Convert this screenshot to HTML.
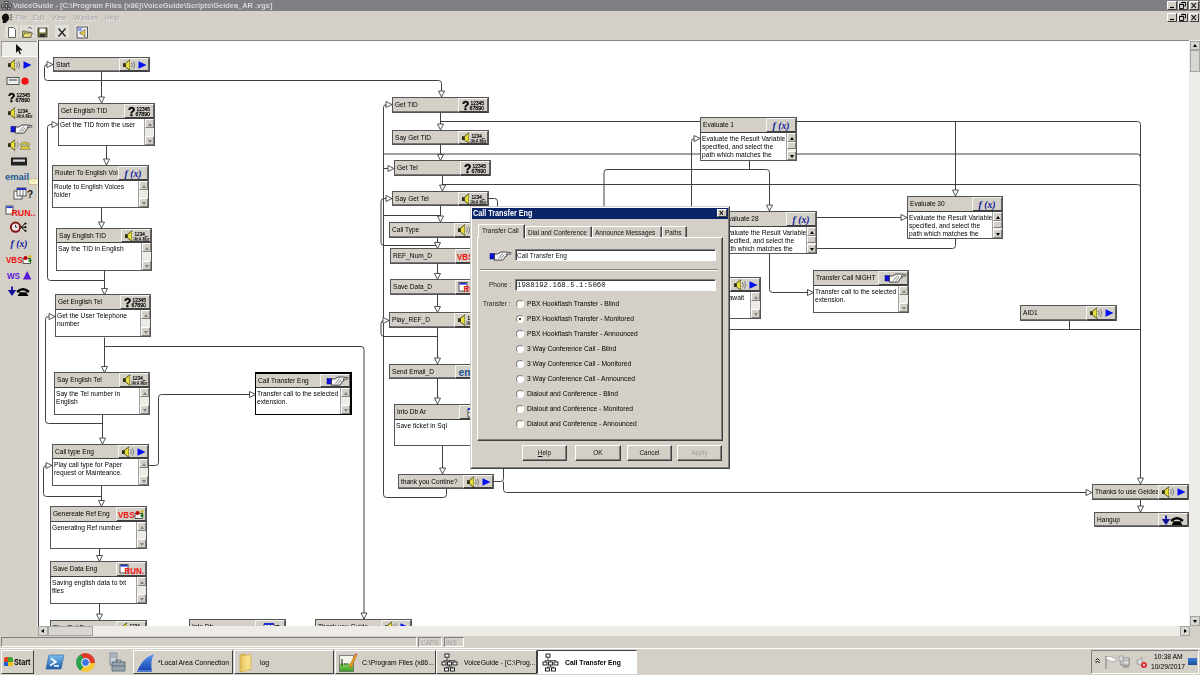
<!DOCTYPE html><html><head><meta charset="utf-8"><style>
*{box-sizing:border-box}
.t,.ti,.bt{filter:grayscale(1)}
body{margin:0;width:1200px;height:675px;overflow:hidden;position:relative;background:#d4d0c8;font-family:"Liberation Sans",sans-serif;font-size:8px;color:#000}
.a{position:absolute}
.t{position:absolute;white-space:nowrap;line-height:1;transform:scaleX(.85);transform-origin:0 0}
.rz{border-top:1px solid #fff;border-left:1px solid #fff;border-right:1px solid #404040;border-bottom:1px solid #404040;background:#d4d0c8}
.fl{border:1px solid #a4a4a4;background:#d8d6d0}
.sk{border-top:1px solid #808080;border-left:1px solid #808080;border-right:1px solid #fff;border-bottom:1px solid #fff}
.n{position:absolute;border:1px solid #555;background:#d4d0c8;box-shadow:inset -1px -1px 0 #777}
.n .ti{position:absolute;left:2px;top:2.5px;font-size:8px;white-space:nowrap;line-height:1;color:#000;transform:scaleX(.82);transform-origin:0 0}
.n .ib{position:absolute;right:0;top:0;border-top:1px solid #f4f4f2;border-left:1px solid #f4f4f2;border-right:1px solid #606060;border-bottom:2px solid #404040;background:#d4d0c8;overflow:hidden}
.n .bd{position:absolute;left:0;right:0;background:#fff;border-top:1px solid #404040;overflow:hidden}
.n .bt{position:absolute;left:1px;top:2px;font-size:8px;line-height:8.2px;white-space:pre;color:#000;transform:scaleX(.83);transform-origin:0 0}
.n .sb{position:absolute;right:0;top:0;bottom:0;width:10px;background:#ecebe6;border-left:1px solid #a0a0a0}
.n .sb i{position:absolute;left:0;width:9px;height:9px;background:#d4d0c8;border-top:1px solid #fff;border-left:1px solid #fff;border-right:1px solid #808080;border-bottom:1px solid #808080}
</style></head><body><div class="a" style="left:0;top:0;width:1200px;height:11px;background:#807f84"></div><div class="t" style="left:13px;top:2px;font-size:8px;font-weight:bold;color:#d8d6d0;transform:scaleX(.93)">VoiceGuide - [C:\Program Files (x86)\VoiceGuide\Scripts\Geidea_AR .vgs]</div><svg class="a" style="left:1px;top:1px" width="11" height="9" viewBox="0 0 11 9"><g fill="#eee" stroke="#222" stroke-width="0.7"><rect x="4" y="0.5" width="3" height="2"/><rect x="0.5" y="4" width="2.5" height="2"/><rect x="4.2" y="4" width="2.5" height="2"/><rect x="8" y="4" width="2.5" height="2"/><rect x="2" y="7" width="2.5" height="1.8"/><rect x="6.5" y="7" width="2.5" height="1.8"/></g></svg><div class="a rz" style="left:1167px;top:1px;width:10px;height:9px"></div><div class="a rz" style="left:1178px;top:1px;width:10px;height:9px"></div><div class="a rz" style="left:1189px;top:1px;width:10px;height:9px"></div><svg class="a" style="left:1167px;top:1px" width="32" height="9" viewBox="0 0 32 9"><path d="M3 6.5h4" stroke="#000" stroke-width="1.2"/><path d="M14.5 1.5h4v3.5h-1.2M12.5 3.5h4v4h-4z" fill="none" stroke="#000" stroke-width="0.9"/><path d="M14.5 1.3h4M12.5 3.3h4" stroke="#000" stroke-width="1.2"/><path d="M24.5 2l4.5 5M29 2l-4.5 5" stroke="#000" stroke-width="1.1"/></svg><div class="a" style="left:0;top:11px;width:1200px;height:13px;background:#d4d0c8"></div><div class="t" style="left:16px;top:14px;font-size:8px;color:#a09e9a;text-shadow:0.5px 0.5px 0 #f4f4f2">File</div><div class="t" style="left:33px;top:14px;font-size:8px;color:#a09e9a;text-shadow:0.5px 0.5px 0 #f4f4f2">Edit</div><div class="t" style="left:52px;top:14px;font-size:8px;color:#a09e9a;text-shadow:0.5px 0.5px 0 #f4f4f2">View</div><div class="t" style="left:74px;top:14px;font-size:8px;color:#a09e9a;text-shadow:0.5px 0.5px 0 #f4f4f2">Window</div><div class="t" style="left:105px;top:14px;font-size:8px;color:#a09e9a;text-shadow:0.5px 0.5px 0 #f4f4f2">Help</div><div class="a rz" style="left:1167px;top:13px;width:10px;height:9px"></div><div class="a rz" style="left:1178px;top:13px;width:10px;height:9px"></div><div class="a rz" style="left:1189px;top:13px;width:10px;height:9px"></div><svg class="a" style="left:1167px;top:13px" width="32" height="9" viewBox="0 0 32 9"><path d="M3 6.5h4" stroke="#000" stroke-width="1.2"/><path d="M14.5 1.5h4v3.5h-1.2M12.5 3.5h4v4h-4z" fill="none" stroke="#000" stroke-width="0.9"/><path d="M14.5 1.3h4M12.5 3.3h4" stroke="#000" stroke-width="1.2"/><path d="M24.5 2l4.5 5M29 2l-4.5 5" stroke="#000" stroke-width="1.1"/></svg><div class="a" style="left:0;top:24px;width:1200px;height:16px;background:#d4d0c8"></div><svg class="a" style="left:0;top:24px" width="100" height="16" viewBox="0 0 100 16"><g fill="#e2e0da"><rect x="5" y="1" width="13" height="13"/><rect x="20" y="1" width="14" height="13"/><rect x="35" y="1" width="14" height="13"/><rect x="55" y="1" width="14" height="13"/><rect x="75" y="1" width="14" height="13"/></g><path d="M8.5 3.5h5l2 2v8h-7z" fill="#fff" stroke="#555" stroke-width="0.9"/><path d="M22.5 7h4l1 1h3.5v5.5h-8.5z" fill="#c8c060" stroke="#555" stroke-width="0.8"/><path d="M22.5 13.5l2-4.5h8l-2 4.5z" fill="#e0d870" stroke="#555" stroke-width="0.8"/><path d="M28 4q3-2 4 1" fill="none" stroke="#555" stroke-width="0.8"/><rect x="38" y="4" width="9" height="9" fill="#707030" stroke="#333" stroke-width="0.8"/><rect x="39.5" y="4.5" width="6" height="4" fill="#fff"/><rect x="40" y="10" width="5" height="3" fill="#333"/><path d="M58.5 4.5l7 8M65.5 4.5l-7 8" stroke="#222" stroke-width="1.3"/><rect x="77" y="3" width="10.5" height="11" fill="#f0f0f8" stroke="#444" stroke-width="0.9"/><rect x="78" y="4" width="4" height="3" fill="#90a0f0"/><path d="M80 8h2l3-3v8l-3-3h-2z" fill="#e0d040" stroke="#555" stroke-width="0.6"/></svg><svg class="a" style="left:1px;top:12px" width="12" height="12" viewBox="0 0 12 12"><path d="M3 2q3-1.5 4.5 1l.3 2 .8 1-.8.5.3 1.2-1 .4q0 1.6-1.6 1.3l-.5 1.6H1.5l.4-2.3Q0 6 1.2 4 2 2.5 3 2z" fill="#111"/><path d="M9 3.5l2-1M9.3 5.2h2.2M9 7l2 1" stroke="#111" stroke-width="0.7"/></svg><div class="a" style="left:1px;top:41px;width:36px;height:16px;background:#ecebe6;border-top:1px solid #909090;border-left:1px solid #a0a0a0;border-bottom:1px solid #fff"></div><div class="a" style="left:5px;top:43px;width:28px;height:12px"><svg width="28" height="12" viewBox="0 0 28 12" style="position:absolute;overflow:visible;"><path d="M11 1v9l2.2-2.2 1.5 3.5 1.3-.6-1.5-3.4h3.2z" fill="#111"/></svg></div><div class="a" style="left:5px;top:59px;width:28px;height:12px"><svg width="28" height="12" viewBox="0 0 28 12" style="position:absolute;overflow:visible;"><path d="M3 4.2h3v3.8H3z" fill="#303018"/><path d="M5.5 4.2l4.5-3.4v10.6l-4.5-3.4z" fill="#e4dc40" stroke="#3a3a10" stroke-width="0.8"/><path d="M10.6 1.5v9.2" stroke="#f4f4f4" stroke-width="1.1" stroke-dasharray="2 1"/><path d="M11.5 3.5q1.5 2.5 0 5M13.5 2.3q2.4 3.7 0 7.4" fill="none" stroke="#808080" stroke-width="1"/><path d="M18.5 2.2l8 3.8-8 3.8z" fill="#0010f0"/></svg></div><div class="a" style="left:5px;top:75px;width:28px;height:12px"><svg width="28" height="12" viewBox="0 0 28 12" style="position:absolute;overflow:visible;"><rect x="2" y="2.5" width="12" height="7" fill="#eee" stroke="#333" stroke-width="0.8"/><path d="M4 5h8" stroke="#333" stroke-width="1"/><circle cx="20" cy="6.2" r="3.6" fill="#f01010"/></svg></div><div class="a" style="left:5px;top:91px;width:28px;height:12px"><svg width="28" height="12" viewBox="0 0 28 12" style="position:absolute;overflow:visible;filter:grayscale(1);"><text x="3" y="10.8" font-family="Liberation Sans" font-weight="bold" font-size="12" fill="#000" stroke="#000" stroke-width="0.3">?</text><text x="11.5" y="5.6" font-family="Liberation Sans" font-size="6.2" fill="#000" stroke="#000" stroke-width="0.25" textLength="13.5" lengthAdjust="spacingAndGlyphs">12345</text><text x="10.5" y="11.2" font-family="Liberation Sans" font-size="6.2" fill="#000" stroke="#000" stroke-width="0.25" textLength="14.5" lengthAdjust="spacingAndGlyphs">67890</text></svg></div><div class="a" style="left:5px;top:107px;width:28px;height:12px"><svg width="28" height="12" viewBox="0 0 28 12" style="position:absolute;overflow:visible;"><path d="M3 4.2h3v3.8H3z" fill="#303018"/><path d="M5.5 4.2l4.5-3.4v10.6l-4.5-3.4z" fill="#e4dc40" stroke="#3a3a10" stroke-width="0.8"/><path d="M10.6 1.5v9.2" stroke="#f4f4f4" stroke-width="1.1" stroke-dasharray="2 1"/><g style="filter:grayscale(1)"><text x="12.5" y="5.6" font-family="Liberation Sans" font-size="6" fill="#000" stroke="#000" stroke-width="0.2" textLength="13" lengthAdjust="spacingAndGlyphs">1234_</text><text x="11.5" y="11.2" font-family="Liberation Sans" font-weight="bold" font-size="5.4" fill="#000" textLength="16" lengthAdjust="spacingAndGlyphs">IAtA Mor</text></g></svg></div><div class="a" style="left:5px;top:123px;width:28px;height:12px"><svg width="28" height="12" viewBox="0 0 28 12" style="position:absolute;overflow:visible;"><rect x="6" y="3.5" width="4.5" height="5.5" fill="#1010e0" stroke="#000060" stroke-width="0.5"/><path d="M10.5 4h3l3.5-2h4.5l5.2.6q1 .9-.2 1.4l-4.5.1 1 .6q.5 1-.6 1.4l-1 .1q0 1.3-1 1.6l-.6 1.5q-.5.8-1.5.8h-8z" fill="#f4f4f4" stroke="#202020" stroke-width="0.8"/><path d="M14.5 8.5l4-5M17 8.8l3-4" stroke="#555" stroke-width="0.7"/></svg></div><div class="a" style="left:5px;top:139px;width:28px;height:12px"><svg width="28" height="12" viewBox="0 0 28 12" style="position:absolute;overflow:visible;"><path d="M3 4.2h3v3.8H3z" fill="#303018"/><path d="M5.5 4.2l4.5-3.4v10.6l-4.5-3.4z" fill="#e4dc40" stroke="#3a3a10" stroke-width="0.8"/><path d="M10.6 1.5v9.2" stroke="#f4f4f4" stroke-width="1.1" stroke-dasharray="2 1"/><path d="M10 3.5q1.5 2.5 0 5M12 2.5q2.2 3.5 0 7" fill="none" stroke="#888" stroke-width="0.9"/><path d="M15 5q5-4 10 0l-1 1.5h-1.5l-.5-1q-2.5-.8-4.5 0l-.5 1h-1.5zM16.5 7h7l1.5 3.5h-10z" fill="#d8c830" stroke="#666" stroke-width="0.5"/></svg></div><div class="a" style="left:5px;top:155px;width:28px;height:12px"><svg width="28" height="12" viewBox="0 0 28 12" style="position:absolute;overflow:visible;"><rect x="6" y="2.5" width="16" height="8" fill="#222"/><rect x="8" y="4.5" width="12" height="2.2" fill="#ddd"/></svg></div><div class="a" style="left:5px;top:171px;width:28px;height:12px"><svg width="28" height="12" viewBox="0 0 28 12" style="position:absolute;overflow:visible;"><text x="0" y="9" font-family="Liberation Sans" font-weight="bold" font-size="9" fill="#1a5a90" textLength="24" lengthAdjust="spacingAndGlyphs">email</text><path d="M24 7.5h9v6h-9z" fill="#fff8c8" stroke="#b0a880" stroke-width="0.6"/><path d="M24 7.5l4.5 3 4.5-3" fill="none" stroke="#b0a880" stroke-width="0.6"/></svg></div><div class="a" style="left:5px;top:187px;width:28px;height:12px"><svg width="28" height="12" viewBox="0 0 28 12" style="position:absolute;overflow:visible;"><rect x="9" y="4" width="8" height="8" fill="#fff" stroke="#333" stroke-width="0.8"/><rect x="12" y="1" width="9" height="8" fill="#fff" stroke="#333" stroke-width="0.8"/><rect x="12" y="1" width="9" height="2" fill="#2030c0"/><path d="M15 3v6M18 3v6" stroke="#333" stroke-width="0.7"/><text x="22" y="11" font-family="Liberation Sans" font-weight="bold" font-size="10" fill="#111">?</text></svg></div><div class="a" style="left:5px;top:205px;width:28px;height:12px"><svg width="28" height="12" viewBox="0 0 28 12" style="position:absolute;overflow:visible;"><rect x="1" y="1" width="7" height="8" fill="#fff" stroke="#333" stroke-width="0.8"/><rect x="1.5" y="1.5" width="6" height="1.6" fill="#2030e0"/><text x="6.5" y="11.2" font-family="Liberation Sans" font-weight="bold" font-size="9" fill="#f01010" textLength="24" lengthAdjust="spacingAndGlyphs">RUN..</text></svg></div><div class="a" style="left:5px;top:221px;width:28px;height:12px"><svg width="28" height="12" viewBox="0 0 28 12" style="position:absolute;overflow:visible;"><circle cx="10.5" cy="6.2" r="4.6" fill="#f0e8e8" stroke="#801818" stroke-width="2"/><path d="M10.5 3.8v2.4h2" stroke="#111" stroke-width="0.8" fill="none"/><path d="M16 6.2l4-3.5M16 6.2h4M16 6.2l4 3.5" stroke="#111" stroke-width="1" fill="none"/><circle cx="20.5" cy="2.5" r="1.1" fill="#111"/><circle cx="20.5" cy="6.2" r="1.1" fill="#111"/><circle cx="20.5" cy="9.8" r="1.1" fill="#111"/></svg></div><div class="a" style="left:5px;top:237px;width:28px;height:12px"><svg width="28" height="12" viewBox="0 0 28 12" style="position:absolute;overflow:visible;"><text x="5.5" y="10" font-family="Liberation Serif" font-style="italic" font-weight="bold" font-size="10.5" fill="#10189a" textLength="17" lengthAdjust="spacingAndGlyphs">f (x)</text></svg></div><div class="a" style="left:5px;top:253px;width:28px;height:12px"><svg width="28" height="12" viewBox="0 0 28 12" style="position:absolute;overflow:visible;"><text x="1" y="10" font-family="Liberation Sans" font-weight="bold" font-size="9" fill="#f01010" textLength="16.5" lengthAdjust="spacingAndGlyphs">VBS</text><rect x="18" y="5.5" width="7.5" height="5" fill="#f4f4f4" stroke="#333" stroke-width="0.8"/><circle cx="20.5" cy="5" r="2" fill="#c00000"/><circle cx="25" cy="3.5" r="1.6" fill="#c8c020"/><circle cx="25" cy="7.5" r="1.6" fill="#108010"/></svg></div><div class="a" style="left:5px;top:269px;width:28px;height:12px"><svg width="28" height="12" viewBox="0 0 28 12" style="position:absolute;overflow:visible;"><text x="2" y="10" font-family="Liberation Sans" font-weight="bold" font-size="9" fill="#5818d8" textLength="13" lengthAdjust="spacingAndGlyphs">WS</text><path d="M18 10.5l4.2-8.5 4.2 8.5z" fill="#5818d8"/></svg></div><div class="a" style="left:5px;top:285px;width:28px;height:12px"><svg width="28" height="12" viewBox="0 0 28 12" style="position:absolute;overflow:visible;"><path d="M7 1.5v6M4.6 6l2.4 3.5 2.4-3.5z" stroke="#10109a" stroke-width="1.8" fill="#10109a"/><path d="M11.5 5.8Q18 0 24.5 5.8l-.6 1.8h-2.6l-.4-1.6q-2.9-1.1-5.8 0l-.4 1.6h-2.6z" fill="#000"/><path d="M14.8 7.2h6.4l2.2 3.8H12.6z" fill="#000"/></svg></div><div class="a" style="left:37px;top:40px;width:1px;height:586px;background:#eeedea"></div><div class="a" style="left:38px;top:40px;width:1151px;height:586px;background:#fff;border-top:1px solid #888;border-left:1px solid #404040;overflow:hidden"><div class="a" style="left:-39px;top:-41px;width:1200px;height:675px"><svg class="a" style="left:0;top:0" width="1200" height="675"><path d="M53 64.5 L47.5 64.5 Q44.5 64.5 44.5 67.5 L44.5 77.5 Q44.5 80.5 47.5 80.5 L438.5 80.5 Q441.5 80.5 441.5 83.5 L441.5 97" fill="none" stroke="#404040" stroke-width="1"/><path d="M101.5 71 L101.5 103" fill="none" stroke="#404040" stroke-width="1"/><path d="M106.5 146 L106.5 165" fill="none" stroke="#404040" stroke-width="1"/><path d="M58 124.5 L50.5 124.5 Q47.5 124.5 47.5 127.5 L47.5 277.5 Q47.5 280.5 50.5 280.5 L104.5 280.5" fill="none" stroke="#404040" stroke-width="1"/><path d="M101.5 208 L101.5 228" fill="none" stroke="#404040" stroke-width="1"/><path d="M104.5 271 L104.5 294.5" fill="none" stroke="#404040" stroke-width="1"/><path d="M55 316.5 L48.5 316.5 Q45.5 316.5 45.5 319.5 L45.5 420.5 Q45.5 423.5 48.5 423.5 L102.5 423.5" fill="none" stroke="#404040" stroke-width="1"/><path d="M104.5 337.5 L104.5 372.5" fill="none" stroke="#404040" stroke-width="1"/><path d="M104.5 346.5 L361.0 346.5 Q364 346.5 364.0 349.5 L364 619" fill="none" stroke="#404040" stroke-width="1"/><path d="M102.5 415 L102.5 444" fill="none" stroke="#404040" stroke-width="1"/><path d="M52 465.5 L46.5 465.5 Q43.5 465.5 43.5 468.5 L43.5 493.5 Q43.5 496.5 46.5 496.5 L101.5 496.5" fill="none" stroke="#404040" stroke-width="1"/><path d="M101.5 486 L101.5 506.5" fill="none" stroke="#404040" stroke-width="1"/><path d="M149 465.5 L155.5 465.5 Q158.5 465.5 158.5 462.5 L158.5 397.5 Q158.5 394.5 161.5 394.5 L255.5 394.5" fill="none" stroke="#404040" stroke-width="1"/><path d="M99.5 549 L99.5 561.5" fill="none" stroke="#404040" stroke-width="1"/><path d="M99.5 604 L99.5 620" fill="none" stroke="#404040" stroke-width="1"/><path d="M392 104.5 L386.5 104.5 Q383.5 104.5 383.5 107.5 L383.5 494.5 Q383.5 497.5 386.5 497.5 L443.5 497.5 Q446.5 497.5 446.5 494.5 L446.5 488" fill="none" stroke="#404040" stroke-width="1"/><path d="M383.5 215.5 L440.5 215.5" fill="none" stroke="#404040" stroke-width="1"/><path d="M383.5 154 L1137.5 154.0 Q1140.5 154 1140.5 157.0 L1140.5 300" fill="none" stroke="#404040" stroke-width="1"/><path d="M440.5 112 L440.5 130" fill="none" stroke="#404040" stroke-width="1"/><path d="M440.5 121.5 L1137.5 121.5 Q1140.5 121.5 1140.5 124.5 L1140.5 484" fill="none" stroke="#404040" stroke-width="1"/><path d="M440.5 144 L440.5 160.5" fill="none" stroke="#404040" stroke-width="1"/><path d="M394 168.5 L383.5 168.5" fill="none" stroke="#404040" stroke-width="1"/><path d="M442.5 175 L442.5 191" fill="none" stroke="#404040" stroke-width="1"/><path d="M442.5 184.5 L1137.5 184.5 Q1140.5 184.5 1140.5 187.5 L1140.5 200" fill="none" stroke="#404040" stroke-width="1"/><path d="M392 198.5 L384.0 198.5 Q381 198.5 381.0 201.5 L381.0 242.5 Q381 245.5 384.0 245.5 L437.5 245.5" fill="none" stroke="#404040" stroke-width="1"/><path d="M488 198.5 L494.5 198.5 Q497.5 198.5 497.5 201.5 L497.5 215" fill="none" stroke="#404040" stroke-width="1"/><path d="M440.5 205 L440.5 222" fill="none" stroke="#404040" stroke-width="1"/><path d="M389 320.5 L384.0 320.5 Q381 320.5 381.0 323.5 L381.0 333.5 Q381 336.5 384.0 336.5 L437.5 336.5" fill="none" stroke="#404040" stroke-width="1"/><path d="M437.5 237 L437.5 248.5" fill="none" stroke="#404040" stroke-width="1"/><path d="M437.5 262 L437.5 279.5" fill="none" stroke="#404040" stroke-width="1"/><path d="M437.5 294 L437.5 312.5" fill="none" stroke="#404040" stroke-width="1"/><path d="M437.5 327 L437.5 364" fill="none" stroke="#404040" stroke-width="1"/><path d="M437.5 378 L437.5 404" fill="none" stroke="#404040" stroke-width="1"/><path d="M442.5 446 L442.5 474" fill="none" stroke="#404040" stroke-width="1"/><path d="M494 481.5 L500.5 481.5 Q503.5 481.5 503.5 478.5 L503.5 460" fill="none" stroke="#404040" stroke-width="1"/><path d="M503.5 481.5 L503.5 489.5 Q503.5 492.5 506.5 492.5 L1092 492.5" fill="none" stroke="#404040" stroke-width="1"/><path d="M700 138.5 L694.5 138.5 Q691.5 138.5 691.5 141.5 L691.5 260" fill="none" stroke="#404040" stroke-width="1"/><path d="M604 260 L604.0 172.5 Q604 169.5 607.0 169.5 L766.5 169.5 Q769.5 169.5 769.5 172.5 L769.5 211" fill="none" stroke="#404040" stroke-width="1"/><path d="M749.5 160 L749.5 169.5" fill="none" stroke="#404040" stroke-width="1"/><path d="M817 217.5 L907 217.5" fill="none" stroke="#404040" stroke-width="1"/><path d="M817 248.5 L952.5 248.5 Q955.5 248.5 955.5 245.5 L955.5 239" fill="none" stroke="#404040" stroke-width="1"/><path d="M955.5 121.5 L955.5 196" fill="none" stroke="#404040" stroke-width="1"/><path d="M769.5 254 L769.5 289.5 Q769.5 292.5 772.5 292.5 L813.5 292.5" fill="none" stroke="#404040" stroke-width="1"/><path d="M1069.5 320 L1069.5 329.5" fill="none" stroke="#404040" stroke-width="1"/><path d="M700 329.5 L1140.5 329.5" fill="none" stroke="#404040" stroke-width="1"/><path d="M1140.5 499 L1140.5 512" fill="none" stroke="#404040" stroke-width="1"/></svg><div class="n" style="left:53px;top:57px;width:97px;height:15px;"><div class="ti" style="width:63px">Start</div><div class="ib" style="width:30px;height:14px"><div class="a" style="left:0px;top:0px"><svg width="28" height="12" viewBox="0 0 28 12" style="position:absolute;overflow:visible;"><path d="M3 4.2h3v3.8H3z" fill="#303018"/><path d="M5.5 4.2l4.5-3.4v10.6l-4.5-3.4z" fill="#e4dc40" stroke="#3a3a10" stroke-width="0.8"/><path d="M10.6 1.5v9.2" stroke="#f4f4f4" stroke-width="1.1" stroke-dasharray="2 1"/><path d="M11.5 3.5q1.5 2.5 0 5M13.5 2.3q2.4 3.7 0 7.4" fill="none" stroke="#808080" stroke-width="1"/><path d="M18.5 2.2l8 3.8-8 3.8z" fill="#0010f0"/></svg></div></div></div><div class="n" style="left:58px;top:103px;width:97px;height:43px;"><div class="ti" style="width:63px">Get English TID</div><div class="ib" style="width:30px;height:15px"><div class="a" style="left:0px;top:0px"><svg width="28" height="12" viewBox="0 0 28 12" style="position:absolute;overflow:visible;filter:grayscale(1);"><text x="3" y="10.8" font-family="Liberation Sans" font-weight="bold" font-size="12" fill="#000" stroke="#000" stroke-width="0.3">?</text><text x="11.5" y="5.6" font-family="Liberation Sans" font-size="6.2" fill="#000" stroke="#000" stroke-width="0.25" textLength="13.5" lengthAdjust="spacingAndGlyphs">12345</text><text x="10.5" y="11.2" font-family="Liberation Sans" font-size="6.2" fill="#000" stroke="#000" stroke-width="0.25" textLength="14.5" lengthAdjust="spacingAndGlyphs">67890</text></svg></div></div><div class="bd" style="top:14px;bottom:0"><div class="bt">Get the TID from the user</div><div class="sb"><i style="top:0"><b style="position:absolute;left:2px;top:3px;border-left:2.5px solid transparent;border-right:2.5px solid transparent;border-bottom:3px solid #808080"></b></i><i style="bottom:0"><b style="position:absolute;left:2px;top:3px;border-left:2.5px solid transparent;border-right:2.5px solid transparent;border-top:3px solid #808080"></b></i></div></div></div><div class="n" style="left:52px;top:165px;width:97px;height:43px;"><div class="ti" style="width:63px">Router To English Voices</div><div class="ib" style="width:30px;height:15px"><div class="a" style="left:0px;top:0px"><svg width="28" height="12" viewBox="0 0 28 12" style="position:absolute;overflow:visible;"><text x="5.5" y="10" font-family="Liberation Serif" font-style="italic" font-weight="bold" font-size="10.5" fill="#10189a" textLength="17" lengthAdjust="spacingAndGlyphs">f (x)</text></svg></div></div><div class="bd" style="top:14px;bottom:0"><div class="bt">Route to English Voices
folder</div><div class="sb"><i style="top:0"><b style="position:absolute;left:2px;top:3px;border-left:2.5px solid transparent;border-right:2.5px solid transparent;border-bottom:3px solid #808080"></b></i><i style="bottom:0"><b style="position:absolute;left:2px;top:3px;border-left:2.5px solid transparent;border-right:2.5px solid transparent;border-top:3px solid #808080"></b></i></div></div></div><div class="n" style="left:56px;top:228px;width:96px;height:43px;"><div class="ti" style="width:62px">Say English TID</div><div class="ib" style="width:30px;height:14px"><div class="a" style="left:0px;top:0px"><svg width="28" height="12" viewBox="0 0 28 12" style="position:absolute;overflow:visible;"><path d="M3 4.2h3v3.8H3z" fill="#303018"/><path d="M5.5 4.2l4.5-3.4v10.6l-4.5-3.4z" fill="#e4dc40" stroke="#3a3a10" stroke-width="0.8"/><path d="M10.6 1.5v9.2" stroke="#f4f4f4" stroke-width="1.1" stroke-dasharray="2 1"/><g style="filter:grayscale(1)"><text x="12.5" y="5.6" font-family="Liberation Sans" font-size="6" fill="#000" stroke="#000" stroke-width="0.2" textLength="13" lengthAdjust="spacingAndGlyphs">1234_</text><text x="11.5" y="11.2" font-family="Liberation Sans" font-weight="bold" font-size="5.4" fill="#000" textLength="16" lengthAdjust="spacingAndGlyphs">IAtA Mor</text></g></svg></div></div><div class="bd" style="top:13px;bottom:0"><div class="bt">Say the TID in English</div><div class="sb"><i style="top:0"><b style="position:absolute;left:2px;top:3px;border-left:2.5px solid transparent;border-right:2.5px solid transparent;border-bottom:3px solid #808080"></b></i><i style="bottom:0"><b style="position:absolute;left:2px;top:3px;border-left:2.5px solid transparent;border-right:2.5px solid transparent;border-top:3px solid #808080"></b></i></div></div></div><div class="n" style="left:55px;top:294px;width:96px;height:43px;"><div class="ti" style="width:62px">Get English Tel</div><div class="ib" style="width:30px;height:15px"><div class="a" style="left:0px;top:0px"><svg width="28" height="12" viewBox="0 0 28 12" style="position:absolute;overflow:visible;filter:grayscale(1);"><text x="3" y="10.8" font-family="Liberation Sans" font-weight="bold" font-size="12" fill="#000" stroke="#000" stroke-width="0.3">?</text><text x="11.5" y="5.6" font-family="Liberation Sans" font-size="6.2" fill="#000" stroke="#000" stroke-width="0.25" textLength="13.5" lengthAdjust="spacingAndGlyphs">12345</text><text x="10.5" y="11.2" font-family="Liberation Sans" font-size="6.2" fill="#000" stroke="#000" stroke-width="0.25" textLength="14.5" lengthAdjust="spacingAndGlyphs">67890</text></svg></div></div><div class="bd" style="top:14px;bottom:0"><div class="bt">Get the User Telephone
number</div><div class="sb"><i style="top:0"><b style="position:absolute;left:2px;top:3px;border-left:2.5px solid transparent;border-right:2.5px solid transparent;border-bottom:3px solid #808080"></b></i><i style="bottom:0"><b style="position:absolute;left:2px;top:3px;border-left:2.5px solid transparent;border-right:2.5px solid transparent;border-top:3px solid #808080"></b></i></div></div></div><div class="n" style="left:54px;top:372px;width:96px;height:43px;"><div class="ti" style="width:62px">Say English Tel</div><div class="ib" style="width:30px;height:15px"><div class="a" style="left:0px;top:0px"><svg width="28" height="12" viewBox="0 0 28 12" style="position:absolute;overflow:visible;"><path d="M3 4.2h3v3.8H3z" fill="#303018"/><path d="M5.5 4.2l4.5-3.4v10.6l-4.5-3.4z" fill="#e4dc40" stroke="#3a3a10" stroke-width="0.8"/><path d="M10.6 1.5v9.2" stroke="#f4f4f4" stroke-width="1.1" stroke-dasharray="2 1"/><g style="filter:grayscale(1)"><text x="12.5" y="5.6" font-family="Liberation Sans" font-size="6" fill="#000" stroke="#000" stroke-width="0.2" textLength="13" lengthAdjust="spacingAndGlyphs">1234_</text><text x="11.5" y="11.2" font-family="Liberation Sans" font-weight="bold" font-size="5.4" fill="#000" textLength="16" lengthAdjust="spacingAndGlyphs">IAtA Mor</text></g></svg></div></div><div class="bd" style="top:14px;bottom:0"><div class="bt">Say the Tel number in
English</div><div class="sb"><i style="top:0"><b style="position:absolute;left:2px;top:3px;border-left:2.5px solid transparent;border-right:2.5px solid transparent;border-bottom:3px solid #808080"></b></i><i style="bottom:0"><b style="position:absolute;left:2px;top:3px;border-left:2.5px solid transparent;border-right:2.5px solid transparent;border-top:3px solid #808080"></b></i></div></div></div><div class="n" style="left:50px;top:506px;width:97px;height:43px;"><div class="ti" style="width:63px">Genereate Ref Eng</div><div class="ib" style="width:30px;height:15px"><div class="a" style="left:0px;top:0px"><svg width="28" height="12" viewBox="0 0 28 12" style="position:absolute;overflow:visible;"><text x="1" y="10" font-family="Liberation Sans" font-weight="bold" font-size="9" fill="#f01010" textLength="16.5" lengthAdjust="spacingAndGlyphs">VBS</text><rect x="18" y="5.5" width="7.5" height="5" fill="#f4f4f4" stroke="#333" stroke-width="0.8"/><circle cx="20.5" cy="5" r="2" fill="#c00000"/><circle cx="25" cy="3.5" r="1.6" fill="#c8c020"/><circle cx="25" cy="7.5" r="1.6" fill="#108010"/></svg></div></div><div class="bd" style="top:14px;bottom:0"><div class="bt">Generating Ref number</div><div class="sb"><i style="top:0"><b style="position:absolute;left:2px;top:3px;border-left:2.5px solid transparent;border-right:2.5px solid transparent;border-bottom:3px solid #808080"></b></i><i style="bottom:0"><b style="position:absolute;left:2px;top:3px;border-left:2.5px solid transparent;border-right:2.5px solid transparent;border-top:3px solid #808080"></b></i></div></div></div><div class="n" style="left:50px;top:561px;width:97px;height:43px;"><div class="ti" style="width:63px">Save Data Eng</div><div class="ib" style="width:30px;height:15px"><div class="a" style="left:0px;top:0px"><svg width="28" height="12" viewBox="0 0 28 12" style="position:absolute;overflow:visible;"><rect x="3" y="1.5" width="8" height="8.5" fill="#fff" stroke="#333" stroke-width="0.8"/><rect x="3.5" y="2" width="7" height="1.6" fill="#2030e0"/><text x="7.5" y="11" font-family="Liberation Sans" font-weight="bold" font-size="8.6" fill="#f01010" textLength="19.5" lengthAdjust="spacingAndGlyphs">RUN.</text></svg></div></div><div class="bd" style="top:14px;bottom:0"><div class="bt">Saving english data to txt
files</div><div class="sb"><i style="top:0"><b style="position:absolute;left:2px;top:3px;border-left:2.5px solid transparent;border-right:2.5px solid transparent;border-bottom:3px solid #808080"></b></i><i style="bottom:0"><b style="position:absolute;left:2px;top:3px;border-left:2.5px solid transparent;border-right:2.5px solid transparent;border-top:3px solid #808080"></b></i></div></div></div><div class="n" style="left:52px;top:444px;width:97px;height:42px;"><div class="ti" style="width:63px">Call type Eng</div><div class="ib" style="width:30px;height:14px"><div class="a" style="left:0px;top:0px"><svg width="28" height="12" viewBox="0 0 28 12" style="position:absolute;overflow:visible;"><path d="M3 4.2h3v3.8H3z" fill="#303018"/><path d="M5.5 4.2l4.5-3.4v10.6l-4.5-3.4z" fill="#e4dc40" stroke="#3a3a10" stroke-width="0.8"/><path d="M10.6 1.5v9.2" stroke="#f4f4f4" stroke-width="1.1" stroke-dasharray="2 1"/><path d="M11.5 3.5q1.5 2.5 0 5M13.5 2.3q2.4 3.7 0 7.4" fill="none" stroke="#808080" stroke-width="1"/><path d="M18.5 2.2l8 3.8-8 3.8z" fill="#0010f0"/></svg></div></div><div class="bd" style="top:13px;bottom:0"><div class="bt">Play call type for Paper
request or Mainteance.</div><div class="sb"><i style="top:0"><b style="position:absolute;left:2px;top:3px;border-left:2.5px solid transparent;border-right:2.5px solid transparent;border-bottom:3px solid #808080"></b></i><i style="bottom:0"><b style="position:absolute;left:2px;top:3px;border-left:2.5px solid transparent;border-right:2.5px solid transparent;border-top:3px solid #808080"></b></i></div></div></div><div class="n" style="left:50px;top:620px;width:97px;height:40px;"><div class="ti" style="width:63px">Play Ref Eng</div><div class="ib" style="width:30px;height:15px"><div class="a" style="left:0px;top:0px"><svg width="28" height="12" viewBox="0 0 28 12" style="position:absolute;overflow:visible;"><path d="M3 4.2h3v3.8H3z" fill="#303018"/><path d="M5.5 4.2l4.5-3.4v10.6l-4.5-3.4z" fill="#e4dc40" stroke="#3a3a10" stroke-width="0.8"/><path d="M10.6 1.5v9.2" stroke="#f4f4f4" stroke-width="1.1" stroke-dasharray="2 1"/><g style="filter:grayscale(1)"><text x="12.5" y="5.6" font-family="Liberation Sans" font-size="6" fill="#000" stroke="#000" stroke-width="0.2" textLength="13" lengthAdjust="spacingAndGlyphs">1234_</text><text x="11.5" y="11.2" font-family="Liberation Sans" font-weight="bold" font-size="5.4" fill="#000" textLength="16" lengthAdjust="spacingAndGlyphs">IAtA Mor</text></g></svg></div></div><div class="bd" style="top:14px;bottom:0"><div class="bt"></div><div class="sb"><i style="top:0"><b style="position:absolute;left:2px;top:3px;border-left:2.5px solid transparent;border-right:2.5px solid transparent;border-bottom:3px solid #808080"></b></i><i style="bottom:0"><b style="position:absolute;left:2px;top:3px;border-left:2.5px solid transparent;border-right:2.5px solid transparent;border-top:3px solid #808080"></b></i></div></div></div><div class="n" style="left:189px;top:619px;width:97px;height:41px;"><div class="ti" style="width:63px">Into Db</div><div class="ib" style="width:30px;height:15px"><div class="a" style="left:0px;top:0px"><svg width="28" height="12" viewBox="0 0 28 12" style="position:absolute;overflow:visible;"><rect x="8" y="3" width="10" height="8" fill="#fff" stroke="#222" stroke-width="0.8"/><rect x="8" y="2" width="10" height="2" fill="#2030d0"/><path d="M8 6.5h10M11 4v7M14.5 4v7" stroke="#222" stroke-width="0.6"/><circle cx="21.5" cy="6.5" r="2.6" fill="#111"/></svg></div></div><div class="bd" style="top:14px;bottom:0"><div class="bt"></div><div class="sb"><i style="top:0"><b style="position:absolute;left:2px;top:3px;border-left:2.5px solid transparent;border-right:2.5px solid transparent;border-bottom:3px solid #808080"></b></i><i style="bottom:0"><b style="position:absolute;left:2px;top:3px;border-left:2.5px solid transparent;border-right:2.5px solid transparent;border-top:3px solid #808080"></b></i></div></div></div><div class="n" style="left:315px;top:619px;width:97px;height:41px;"><div class="ti" style="width:63px">Thank you Guide</div><div class="ib" style="width:30px;height:15px"><div class="a" style="left:0px;top:0px"><svg width="28" height="12" viewBox="0 0 28 12" style="position:absolute;overflow:visible;"><path d="M3 4.2h3v3.8H3z" fill="#303018"/><path d="M5.5 4.2l4.5-3.4v10.6l-4.5-3.4z" fill="#e4dc40" stroke="#3a3a10" stroke-width="0.8"/><path d="M10.6 1.5v9.2" stroke="#f4f4f4" stroke-width="1.1" stroke-dasharray="2 1"/><path d="M11.5 3.5q1.5 2.5 0 5M13.5 2.3q2.4 3.7 0 7.4" fill="none" stroke="#808080" stroke-width="1"/><path d="M18.5 2.2l8 3.8-8 3.8z" fill="#0010f0"/></svg></div></div><div class="bd" style="top:14px;bottom:0"><div class="bt"></div><div class="sb"><i style="top:0"><b style="position:absolute;left:2px;top:3px;border-left:2.5px solid transparent;border-right:2.5px solid transparent;border-bottom:3px solid #808080"></b></i><i style="bottom:0"><b style="position:absolute;left:2px;top:3px;border-left:2.5px solid transparent;border-right:2.5px solid transparent;border-top:3px solid #808080"></b></i></div></div></div><div class="n" style="left:392px;top:97px;width:97px;height:16px;"><div class="ti" style="width:63px">Get TID</div><div class="ib" style="width:30px;height:15px"><div class="a" style="left:0px;top:0px"><svg width="28" height="12" viewBox="0 0 28 12" style="position:absolute;overflow:visible;filter:grayscale(1);"><text x="3" y="10.8" font-family="Liberation Sans" font-weight="bold" font-size="12" fill="#000" stroke="#000" stroke-width="0.3">?</text><text x="11.5" y="5.6" font-family="Liberation Sans" font-size="6.2" fill="#000" stroke="#000" stroke-width="0.25" textLength="13.5" lengthAdjust="spacingAndGlyphs">12345</text><text x="10.5" y="11.2" font-family="Liberation Sans" font-size="6.2" fill="#000" stroke="#000" stroke-width="0.25" textLength="14.5" lengthAdjust="spacingAndGlyphs">67890</text></svg></div></div></div><div class="n" style="left:392px;top:130px;width:97px;height:15px;"><div class="ti" style="width:63px">Say Get TID</div><div class="ib" style="width:30px;height:14px"><div class="a" style="left:0px;top:0px"><svg width="28" height="12" viewBox="0 0 28 12" style="position:absolute;overflow:visible;"><path d="M3 4.2h3v3.8H3z" fill="#303018"/><path d="M5.5 4.2l4.5-3.4v10.6l-4.5-3.4z" fill="#e4dc40" stroke="#3a3a10" stroke-width="0.8"/><path d="M10.6 1.5v9.2" stroke="#f4f4f4" stroke-width="1.1" stroke-dasharray="2 1"/><g style="filter:grayscale(1)"><text x="12.5" y="5.6" font-family="Liberation Sans" font-size="6" fill="#000" stroke="#000" stroke-width="0.2" textLength="13" lengthAdjust="spacingAndGlyphs">1234_</text><text x="11.5" y="11.2" font-family="Liberation Sans" font-weight="bold" font-size="5.4" fill="#000" textLength="16" lengthAdjust="spacingAndGlyphs">IAtA Mor</text></g></svg></div></div></div><div class="n" style="left:394px;top:160px;width:97px;height:16px;"><div class="ti" style="width:63px">Get Tel</div><div class="ib" style="width:30px;height:15px"><div class="a" style="left:0px;top:0px"><svg width="28" height="12" viewBox="0 0 28 12" style="position:absolute;overflow:visible;filter:grayscale(1);"><text x="3" y="10.8" font-family="Liberation Sans" font-weight="bold" font-size="12" fill="#000" stroke="#000" stroke-width="0.3">?</text><text x="11.5" y="5.6" font-family="Liberation Sans" font-size="6.2" fill="#000" stroke="#000" stroke-width="0.25" textLength="13.5" lengthAdjust="spacingAndGlyphs">12345</text><text x="10.5" y="11.2" font-family="Liberation Sans" font-size="6.2" fill="#000" stroke="#000" stroke-width="0.25" textLength="14.5" lengthAdjust="spacingAndGlyphs">67890</text></svg></div></div></div><div class="n" style="left:392px;top:191px;width:97px;height:15px;"><div class="ti" style="width:63px">Say Get Tel</div><div class="ib" style="width:30px;height:14px"><div class="a" style="left:0px;top:0px"><svg width="28" height="12" viewBox="0 0 28 12" style="position:absolute;overflow:visible;"><path d="M3 4.2h3v3.8H3z" fill="#303018"/><path d="M5.5 4.2l4.5-3.4v10.6l-4.5-3.4z" fill="#e4dc40" stroke="#3a3a10" stroke-width="0.8"/><path d="M10.6 1.5v9.2" stroke="#f4f4f4" stroke-width="1.1" stroke-dasharray="2 1"/><g style="filter:grayscale(1)"><text x="12.5" y="5.6" font-family="Liberation Sans" font-size="6" fill="#000" stroke="#000" stroke-width="0.2" textLength="13" lengthAdjust="spacingAndGlyphs">1234_</text><text x="11.5" y="11.2" font-family="Liberation Sans" font-weight="bold" font-size="5.4" fill="#000" textLength="16" lengthAdjust="spacingAndGlyphs">IAtA Mor</text></g></svg></div></div></div><div class="n" style="left:389px;top:222px;width:96px;height:16px;"><div class="ti" style="width:62px">Call Type</div><div class="ib" style="width:30px;height:15px"><div class="a" style="left:0px;top:0px"><svg width="28" height="12" viewBox="0 0 28 12" style="position:absolute;overflow:visible;"><path d="M3 4.2h3v3.8H3z" fill="#303018"/><path d="M5.5 4.2l4.5-3.4v10.6l-4.5-3.4z" fill="#e4dc40" stroke="#3a3a10" stroke-width="0.8"/><path d="M10.6 1.5v9.2" stroke="#f4f4f4" stroke-width="1.1" stroke-dasharray="2 1"/><path d="M11.5 3.5q1.5 2.5 0 5M13.5 2.3q2.4 3.7 0 7.4" fill="none" stroke="#808080" stroke-width="1"/><path d="M18.5 2.2l8 3.8-8 3.8z" fill="#0010f0"/></svg></div></div></div><div class="n" style="left:390px;top:248px;width:96px;height:16px;"><div class="ti" style="width:62px">REF_Num_D</div><div class="ib" style="width:30px;height:15px"><div class="a" style="left:0px;top:0px"><svg width="28" height="12" viewBox="0 0 28 12" style="position:absolute;overflow:visible;"><text x="1" y="10" font-family="Liberation Sans" font-weight="bold" font-size="9" fill="#f01010" textLength="16.5" lengthAdjust="spacingAndGlyphs">VBS</text><rect x="18" y="5.5" width="7.5" height="5" fill="#f4f4f4" stroke="#333" stroke-width="0.8"/><circle cx="20.5" cy="5" r="2" fill="#c00000"/><circle cx="25" cy="3.5" r="1.6" fill="#c8c020"/><circle cx="25" cy="7.5" r="1.6" fill="#108010"/></svg></div></div></div><div class="n" style="left:390px;top:279px;width:96px;height:16px;"><div class="ti" style="width:62px">Save Data_D</div><div class="ib" style="width:30px;height:15px"><div class="a" style="left:0px;top:0px"><svg width="28" height="12" viewBox="0 0 28 12" style="position:absolute;overflow:visible;"><rect x="3" y="1.5" width="8" height="8.5" fill="#fff" stroke="#333" stroke-width="0.8"/><rect x="3.5" y="2" width="7" height="1.6" fill="#2030e0"/><text x="7.5" y="11" font-family="Liberation Sans" font-weight="bold" font-size="8.6" fill="#f01010" textLength="19.5" lengthAdjust="spacingAndGlyphs">RUN.</text></svg></div></div></div><div class="n" style="left:389px;top:312px;width:96px;height:16px;"><div class="ti" style="width:62px">Play_REF_D</div><div class="ib" style="width:30px;height:15px"><div class="a" style="left:0px;top:0px"><svg width="28" height="12" viewBox="0 0 28 12" style="position:absolute;overflow:visible;"><path d="M3 4.2h3v3.8H3z" fill="#303018"/><path d="M5.5 4.2l4.5-3.4v10.6l-4.5-3.4z" fill="#e4dc40" stroke="#3a3a10" stroke-width="0.8"/><path d="M10.6 1.5v9.2" stroke="#f4f4f4" stroke-width="1.1" stroke-dasharray="2 1"/><g style="filter:grayscale(1)"><text x="12.5" y="5.6" font-family="Liberation Sans" font-size="6" fill="#000" stroke="#000" stroke-width="0.2" textLength="13" lengthAdjust="spacingAndGlyphs">1234_</text><text x="11.5" y="11.2" font-family="Liberation Sans" font-weight="bold" font-size="5.4" fill="#000" textLength="16" lengthAdjust="spacingAndGlyphs">IAtA Mor</text></g></svg></div></div></div><div class="n" style="left:389px;top:364px;width:97px;height:15px;"><div class="ti" style="width:63px">Send Email_D</div><div class="ib" style="width:30px;height:14px"><div class="a" style="left:0px;top:0px"><svg width="28" height="12" viewBox="0 0 28 12" style="position:absolute;overflow:visible;"><text x="2.5" y="9.8" font-family="Liberation Sans" font-weight="bold" font-size="10" fill="#1a5890" textLength="27" lengthAdjust="spacingAndGlyphs">email</text></svg></div></div></div><div class="n" style="left:394px;top:404px;width:96px;height:42px;"><div class="ti" style="width:62px">Into Db Ar</div><div class="ib" style="width:30px;height:15px"><div class="a" style="left:0px;top:0px"><svg width="28" height="12" viewBox="0 0 28 12" style="position:absolute;overflow:visible;"><rect x="8" y="3" width="10" height="8" fill="#fff" stroke="#222" stroke-width="0.8"/><rect x="8" y="2" width="10" height="2" fill="#2030d0"/><path d="M8 6.5h10M11 4v7M14.5 4v7" stroke="#222" stroke-width="0.6"/><circle cx="21.5" cy="6.5" r="2.6" fill="#111"/></svg></div></div><div class="bd" style="top:14px;bottom:0"><div class="bt">Save ticket in Sql</div><div class="sb"><i style="top:0"><b style="position:absolute;left:2px;top:3px;border-left:2.5px solid transparent;border-right:2.5px solid transparent;border-bottom:3px solid #808080"></b></i><i style="bottom:0"><b style="position:absolute;left:2px;top:3px;border-left:2.5px solid transparent;border-right:2.5px solid transparent;border-top:3px solid #808080"></b></i></div></div></div><div class="n" style="left:398px;top:474px;width:96px;height:15px;"><div class="ti" style="width:62px">thank you Contine?</div><div class="ib" style="width:30px;height:14px"><div class="a" style="left:0px;top:0px"><svg width="28" height="12" viewBox="0 0 28 12" style="position:absolute;overflow:visible;"><path d="M3 4.2h3v3.8H3z" fill="#303018"/><path d="M5.5 4.2l4.5-3.4v10.6l-4.5-3.4z" fill="#e4dc40" stroke="#3a3a10" stroke-width="0.8"/><path d="M10.6 1.5v9.2" stroke="#f4f4f4" stroke-width="1.1" stroke-dasharray="2 1"/><path d="M11.5 3.5q1.5 2.5 0 5M13.5 2.3q2.4 3.7 0 7.4" fill="none" stroke="#808080" stroke-width="1"/><path d="M18.5 2.2l8 3.8-8 3.8z" fill="#0010f0"/></svg></div></div></div><div class="n" style="left:700px;top:117px;width:97px;height:44px;"><div class="ti" style="width:63px">Evaluate 1</div><div class="ib" style="width:30px;height:15px"><div class="a" style="left:0px;top:0px"><svg width="28" height="12" viewBox="0 0 28 12" style="position:absolute;overflow:visible;"><text x="5.5" y="10" font-family="Liberation Serif" font-style="italic" font-weight="bold" font-size="10.5" fill="#10189a" textLength="17" lengthAdjust="spacingAndGlyphs">f (x)</text></svg></div></div><div class="bd" style="top:14px;bottom:0"><div class="bt">Evaluate the Result Variable
specified, and select the
path which matches the</div><div class="sb"><i style="top:0"><b style="position:absolute;left:2px;top:3px;border-left:2.5px solid transparent;border-right:2.5px solid transparent;border-bottom:3px solid #000"></b></i><i style="top:9px;height:7px"></i><i style="bottom:0"><b style="position:absolute;left:2px;top:3px;border-left:2.5px solid transparent;border-right:2.5px solid transparent;border-top:3px solid #000"></b></i></div></div></div><div class="n" style="left:721px;top:211px;width:96px;height:43px;"><div class="ti" style="width:62px">Evaluate 28</div><div class="ib" style="width:30px;height:15px"><div class="a" style="left:0px;top:0px"><svg width="28" height="12" viewBox="0 0 28 12" style="position:absolute;overflow:visible;"><text x="5.5" y="10" font-family="Liberation Serif" font-style="italic" font-weight="bold" font-size="10.5" fill="#10189a" textLength="17" lengthAdjust="spacingAndGlyphs">f (x)</text></svg></div></div><div class="bd" style="top:14px;bottom:0"><div class="bt">Evaluate the Result Variable
specified, and select the
path which matches the</div><div class="sb"><i style="top:0"><b style="position:absolute;left:2px;top:3px;border-left:2.5px solid transparent;border-right:2.5px solid transparent;border-bottom:3px solid #000"></b></i><i style="top:9px;height:7px"></i><i style="bottom:0"><b style="position:absolute;left:2px;top:3px;border-left:2.5px solid transparent;border-right:2.5px solid transparent;border-top:3px solid #000"></b></i></div></div></div><div class="n" style="left:907px;top:196px;width:96px;height:43px;"><div class="ti" style="width:62px">Evaluate 30</div><div class="ib" style="width:30px;height:15px"><div class="a" style="left:0px;top:0px"><svg width="28" height="12" viewBox="0 0 28 12" style="position:absolute;overflow:visible;"><text x="5.5" y="10" font-family="Liberation Serif" font-style="italic" font-weight="bold" font-size="10.5" fill="#10189a" textLength="17" lengthAdjust="spacingAndGlyphs">f (x)</text></svg></div></div><div class="bd" style="top:14px;bottom:0"><div class="bt">Evaluate the Result Variable
specified, and select the
path which matches the</div><div class="sb"><i style="top:0"><b style="position:absolute;left:2px;top:3px;border-left:2.5px solid transparent;border-right:2.5px solid transparent;border-bottom:3px solid #000"></b></i><i style="top:9px;height:7px"></i><i style="bottom:0"><b style="position:absolute;left:2px;top:3px;border-left:2.5px solid transparent;border-right:2.5px solid transparent;border-top:3px solid #000"></b></i></div></div></div><div class="n" style="left:813px;top:270px;width:96px;height:43px;"><div class="ti" style="width:62px">Transfer Call NIGHT</div><div class="ib" style="width:30px;height:15px"><div class="a" style="left:0px;top:0px"><svg width="28" height="12" viewBox="0 0 28 12" style="position:absolute;overflow:visible;"><rect x="6" y="3.5" width="4.5" height="5.5" fill="#1010e0" stroke="#000060" stroke-width="0.5"/><path d="M10.5 4h3l3.5-2h4.5l5.2.6q1 .9-.2 1.4l-4.5.1 1 .6q.5 1-.6 1.4l-1 .1q0 1.3-1 1.6l-.6 1.5q-.5.8-1.5.8h-8z" fill="#f4f4f4" stroke="#202020" stroke-width="0.8"/><path d="M14.5 8.5l4-5M17 8.8l3-4" stroke="#555" stroke-width="0.7"/></svg></div></div><div class="bd" style="top:14px;bottom:0"><div class="bt">Transfer call to the selected
extension.</div><div class="sb"><i style="top:0"><b style="position:absolute;left:2px;top:3px;border-left:2.5px solid transparent;border-right:2.5px solid transparent;border-bottom:3px solid #808080"></b></i><i style="bottom:0"><b style="position:absolute;left:2px;top:3px;border-left:2.5px solid transparent;border-right:2.5px solid transparent;border-top:3px solid #808080"></b></i></div></div></div><div class="n" style="left:665px;top:277px;width:96px;height:42px;"><div class="ti" style="width:62px">Play await</div><div class="ib" style="width:30px;height:14px"><div class="a" style="left:0px;top:0px"><svg width="28" height="12" viewBox="0 0 28 12" style="position:absolute;overflow:visible;"><path d="M3 4.2h3v3.8H3z" fill="#303018"/><path d="M5.5 4.2l4.5-3.4v10.6l-4.5-3.4z" fill="#e4dc40" stroke="#3a3a10" stroke-width="0.8"/><path d="M10.6 1.5v9.2" stroke="#f4f4f4" stroke-width="1.1" stroke-dasharray="2 1"/><path d="M11.5 3.5q1.5 2.5 0 5M13.5 2.3q2.4 3.7 0 7.4" fill="none" stroke="#808080" stroke-width="1"/><path d="M18.5 2.2l8 3.8-8 3.8z" fill="#0010f0"/></svg></div></div><div class="bd" style="top:13px;bottom:0"><div class="bt">Please hold the line, await</div><div class="sb"><i style="top:0"><b style="position:absolute;left:2px;top:3px;border-left:2.5px solid transparent;border-right:2.5px solid transparent;border-bottom:3px solid #808080"></b></i><i style="bottom:0"><b style="position:absolute;left:2px;top:3px;border-left:2.5px solid transparent;border-right:2.5px solid transparent;border-top:3px solid #808080"></b></i></div></div></div><div class="n" style="left:1020px;top:305px;width:97px;height:16px;"><div class="ti" style="width:63px">AID1</div><div class="ib" style="width:30px;height:15px"><div class="a" style="left:0px;top:0px"><svg width="28" height="12" viewBox="0 0 28 12" style="position:absolute;overflow:visible;"><path d="M3 4.2h3v3.8H3z" fill="#303018"/><path d="M5.5 4.2l4.5-3.4v10.6l-4.5-3.4z" fill="#e4dc40" stroke="#3a3a10" stroke-width="0.8"/><path d="M10.6 1.5v9.2" stroke="#f4f4f4" stroke-width="1.1" stroke-dasharray="2 1"/><path d="M11.5 3.5q1.5 2.5 0 5M13.5 2.3q2.4 3.7 0 7.4" fill="none" stroke="#808080" stroke-width="1"/><path d="M18.5 2.2l8 3.8-8 3.8z" fill="#0010f0"/></svg></div></div></div><div class="n" style="left:1092px;top:484px;width:97px;height:16px;"><div class="ti" style="width:63px">Thanks to use Geidea</div><div class="ib" style="width:30px;height:15px"><div class="a" style="left:0px;top:0px"><svg width="28" height="12" viewBox="0 0 28 12" style="position:absolute;overflow:visible;"><path d="M3 4.2h3v3.8H3z" fill="#303018"/><path d="M5.5 4.2l4.5-3.4v10.6l-4.5-3.4z" fill="#e4dc40" stroke="#3a3a10" stroke-width="0.8"/><path d="M10.6 1.5v9.2" stroke="#f4f4f4" stroke-width="1.1" stroke-dasharray="2 1"/><path d="M11.5 3.5q1.5 2.5 0 5M13.5 2.3q2.4 3.7 0 7.4" fill="none" stroke="#808080" stroke-width="1"/><path d="M18.5 2.2l8 3.8-8 3.8z" fill="#0010f0"/></svg></div></div></div><div class="n" style="left:1094px;top:512px;width:95px;height:15px;"><div class="ti" style="width:61px">Hangup</div><div class="ib" style="width:30px;height:14px"><div class="a" style="left:0px;top:0px"><svg width="28" height="12" viewBox="0 0 28 12" style="position:absolute;overflow:visible;"><path d="M7 1.5v6M4.6 6l2.4 3.5 2.4-3.5z" stroke="#10109a" stroke-width="1.8" fill="#10109a"/><path d="M11.5 5.8Q18 0 24.5 5.8l-.6 1.8h-2.6l-.4-1.6q-2.9-1.1-5.8 0l-.4 1.6h-2.6z" fill="#000"/><path d="M14.8 7.2h6.4l2.2 3.8H12.6z" fill="#000"/></svg></div></div></div><div class="n" style="left:255px;top:372px;width:97px;height:43px;border:1px solid #000;border-top-width:2px;border-right-width:2px"><div class="ti" style="width:63px">Call Transfer Eng</div><div class="ib" style="width:30px;height:14px"><div class="a" style="left:0px;top:0px"><svg width="28" height="12" viewBox="0 0 28 12" style="position:absolute;overflow:visible;"><rect x="6" y="3.5" width="4.5" height="5.5" fill="#1010e0" stroke="#000060" stroke-width="0.5"/><path d="M10.5 4h3l3.5-2h4.5l5.2.6q1 .9-.2 1.4l-4.5.1 1 .6q.5 1-.6 1.4l-1 .1q0 1.3-1 1.6l-.6 1.5q-.5.8-1.5.8h-8z" fill="#f4f4f4" stroke="#202020" stroke-width="0.8"/><path d="M14.5 8.5l4-5M17 8.8l3-4" stroke="#555" stroke-width="0.7"/></svg></div></div><div class="bd" style="top:13px;bottom:0"><div class="bt">Transfer call to the selected
extension.</div><div class="sb"><i style="top:0"><b style="position:absolute;left:2px;top:3px;border-left:2.5px solid transparent;border-right:2.5px solid transparent;border-bottom:3px solid #808080"></b></i><i style="bottom:0"><b style="position:absolute;left:2px;top:3px;border-left:2.5px solid transparent;border-right:2.5px solid transparent;border-top:3px solid #808080"></b></i></div></div></div><svg class="a" style="left:0;top:0" width="1200" height="675"><path d="M47 61.5v6l6-3z" fill="#fff" stroke="#404040" stroke-width="0.9"/><path d="M438.5 91h6l-3 6z" fill="#fff" stroke="#404040" stroke-width="0.9"/><path d="M98.5 97h6l-3 6z" fill="#fff" stroke="#404040" stroke-width="0.9"/><path d="M103.5 159h6l-3 6z" fill="#fff" stroke="#404040" stroke-width="0.9"/><path d="M52 121.5v6l6-3z" fill="#fff" stroke="#404040" stroke-width="0.9"/><path d="M98.5 222h6l-3 6z" fill="#fff" stroke="#404040" stroke-width="0.9"/><path d="M101.5 288.5h6l-3 6z" fill="#fff" stroke="#404040" stroke-width="0.9"/><path d="M49 313.5v6l6-3z" fill="#fff" stroke="#404040" stroke-width="0.9"/><path d="M101.5 366.5h6l-3 6z" fill="#fff" stroke="#404040" stroke-width="0.9"/><path d="M361 613h6l-3 6z" fill="#fff" stroke="#404040" stroke-width="0.9"/><path d="M99.5 438h6l-3 6z" fill="#fff" stroke="#404040" stroke-width="0.9"/><path d="M46 462.5v6l6-3z" fill="#fff" stroke="#404040" stroke-width="0.9"/><path d="M98.5 500.5h6l-3 6z" fill="#fff" stroke="#404040" stroke-width="0.9"/><path d="M249.5 391.5v6l6-3z" fill="#fff" stroke="#404040" stroke-width="0.9"/><path d="M96.5 555.5h6l-3 6z" fill="#fff" stroke="#404040" stroke-width="0.9"/><path d="M96.5 614h6l-3 6z" fill="#fff" stroke="#404040" stroke-width="0.9"/><path d="M386 101.5v6l6-3z" fill="#fff" stroke="#404040" stroke-width="0.9"/><path d="M437.5 124h6l-3 6z" fill="#fff" stroke="#404040" stroke-width="0.9"/><path d="M1137.5 478h6l-3 6z" fill="#fff" stroke="#404040" stroke-width="0.9"/><path d="M437.5 154.5h6l-3 6z" fill="#fff" stroke="#404040" stroke-width="0.9"/><path d="M388 165.5v6l6-3z" fill="#fff" stroke="#404040" stroke-width="0.9"/><path d="M439.5 185h6l-3 6z" fill="#fff" stroke="#404040" stroke-width="0.9"/><path d="M386 195.5v6l6-3z" fill="#fff" stroke="#404040" stroke-width="0.9"/><path d="M437.5 216h6l-3 6z" fill="#fff" stroke="#404040" stroke-width="0.9"/><path d="M434.5 242.5h6l-3 6z" fill="#fff" stroke="#404040" stroke-width="0.9"/><path d="M434.5 273.5h6l-3 6z" fill="#fff" stroke="#404040" stroke-width="0.9"/><path d="M434.5 306.5h6l-3 6z" fill="#fff" stroke="#404040" stroke-width="0.9"/><path d="M383 317.5v6l6-3z" fill="#fff" stroke="#404040" stroke-width="0.9"/><path d="M434.5 358h6l-3 6z" fill="#fff" stroke="#404040" stroke-width="0.9"/><path d="M434.5 398h6l-3 6z" fill="#fff" stroke="#404040" stroke-width="0.9"/><path d="M439.5 468h6l-3 6z" fill="#fff" stroke="#404040" stroke-width="0.9"/><path d="M1086 489.5v6l6-3z" fill="#fff" stroke="#404040" stroke-width="0.9"/><path d="M694 135.5v6l6-3z" fill="#fff" stroke="#404040" stroke-width="0.9"/><path d="M766.5 205h6l-3 6z" fill="#fff" stroke="#404040" stroke-width="0.9"/><path d="M901 214.5v6l6-3z" fill="#fff" stroke="#404040" stroke-width="0.9"/><path d="M952.5 190h6l-3 6z" fill="#fff" stroke="#404040" stroke-width="0.9"/><path d="M807.5 289.5v6l6-3z" fill="#fff" stroke="#404040" stroke-width="0.9"/><path d="M1137.5 506h6l-3 6z" fill="#fff" stroke="#404040" stroke-width="0.9"/></svg></div></div><div class="a" style="left:1189px;top:40px;width:11px;height:586px;background-color:#f0efeb;background-image:linear-gradient(45deg,#e9e8e3 25%,transparent 25%,transparent 75%,#e9e8e3 75%),linear-gradient(45deg,#e9e8e3 25%,transparent 25%,transparent 75%,#e9e8e3 75%);background-size:2px 2px;background-position:0 0,1px 1px"></div><div class="a fl" style="left:1190px;top:41px;width:10px;height:9px"></div><div class="a" style="left:1193px;top:44px;width:0;height:0;border-left:2.5px solid transparent;border-right:2.5px solid transparent;border-bottom:3px solid #000"></div><div class="a fl" style="left:1190px;top:50px;width:10px;height:22px"></div><div class="a fl" style="left:1190px;top:616px;width:10px;height:10px"></div><div class="a" style="left:1192.5px;top:620px;width:0;height:0;border-left:2.5px solid transparent;border-right:2.5px solid transparent;border-top:3px solid #000"></div><div class="a" style="left:38px;top:626px;width:1151px;height:10px;background-color:#f0efeb;background-image:linear-gradient(45deg,#e9e8e3 25%,transparent 25%,transparent 75%,#e9e8e3 75%),linear-gradient(45deg,#e9e8e3 25%,transparent 25%,transparent 75%,#e9e8e3 75%);background-size:2px 2px;background-position:0 0,1px 1px"></div><div class="a fl" style="left:38px;top:626px;width:10px;height:10px"></div><div class="a" style="left:41px;top:628.5px;width:0;height:0;border-top:2.5px solid transparent;border-bottom:2.5px solid transparent;border-right:3px solid #000"></div><div class="a fl" style="left:48px;top:626px;width:45px;height:10px"></div><div class="a fl" style="left:1180px;top:626px;width:10px;height:10px"></div><div class="a" style="left:1184px;top:628.5px;width:0;height:0;border-top:2.5px solid transparent;border-bottom:2.5px solid transparent;border-left:3px solid #000"></div><div class="a" style="left:1190px;top:626px;width:10px;height:10px;background:#d4d0c8"></div><div class="a" style="left:0;top:636px;width:1200px;height:12px;background:#d4d0c8"></div><div class="a sk" style="left:1px;top:637px;width:416px;height:10px"></div><div class="a sk" style="left:418px;top:637px;width:24px;height:10px"></div><div class="t" style="left:421px;top:638.5px;font-size:7.5px;color:#a0a0a0">CAPS</div><div class="a sk" style="left:444px;top:637px;width:20px;height:10px"></div><div class="t" style="left:446px;top:638.5px;font-size:7.5px;color:#a0a0a0">INS</div><div class="a" style="left:0;top:648px;width:1200px;height:27px;background:#d4d0c8;border-top:1px solid #fff"></div><div class="a rz" style="left:1px;top:650px;width:33px;height:24px;"><div class="a" style="left:2px;top:6px;width:9px;height:9px;background:linear-gradient(90deg,#e84020 50%,#40a030 50%);border-radius:2px"></div><div class="a" style="left:2px;top:10.5px;width:9px;height:4.5px;background:linear-gradient(90deg,#2060e0 50%,#f0c020 50%)"></div><div class="t" style="left:12px;top:7px;font-size:8.5px;font-weight:bold">Start</div></div><svg class="a" style="left:45px;top:653px" width="20" height="18" viewBox="0 0 20 18"><defs><linearGradient id="ps" x1="0" y1="0" x2="0" y2="1"><stop offset="0" stop-color="#7cc0f0"/><stop offset="1" stop-color="#1c5aa8"/></linearGradient></defs><path d="M4 2h15l-3 14H1z" fill="url(#ps)" stroke="#2a60a0" stroke-width="0.6"/><path d="M6 5.5l5 3.5-6 3.5M9 13h5" stroke="#fff" stroke-width="1.6" fill="none"/></svg><div class="a" style="left:76px;top:653px;width:19px;height:19px;border-radius:50%;background:conic-gradient(from -30deg,#e03a2c 0 120deg,#f8c830 120deg 240deg,#2aa048 240deg 360deg)"></div><div class="a" style="left:81px;top:658px;width:9px;height:9px;border-radius:50%;background:#3a78e0;border:1.5px solid #fff"></div><svg class="a" style="left:107px;top:651px" width="20" height="22" viewBox="0 0 20 22"><path d="M3 2h7v12H3z" fill="#c8d0d8" stroke="#687888" stroke-width="0.8"/><path d="M4 4h5M4 6h5" stroke="#808890" stroke-width="0.8"/><path d="M5 11h13v9H5z" fill="#98a4b0" stroke="#506070" stroke-width="0.8"/><path d="M9 11V9h5v2M5 15h13" fill="none" stroke="#506070" stroke-width="0.8"/></svg><div class="a rz" style="left:133px;top:650px;width:100px;height:24px;"><svg class="a" style="left:2px;top:1px" width="20" height="21" viewBox="0 0 20 21"><defs><linearGradient id="ws" x1="0" y1="0" x2="0" y2="1"><stop offset="0" stop-color="#5a98f0"/><stop offset="1" stop-color="#1040b0"/></linearGradient></defs><path d="M1 20Q6 6 18 2Q14 9 16 20z" fill="url(#ws)"/><path d="M2 19h14" stroke="#8ab0e8" stroke-width="1"/></svg><div class="t" style="left:24px;top:7.5px;font-size:8px">*Local Area Connection</div></div><div class="a rz" style="left:234px;top:650px;width:100px;height:24px;"><svg class="a" style="left:3px;top:1px" width="16" height="21" viewBox="0 0 16 21"><path d="M2 3l5-1v17l-5 1z" fill="#e8c860" stroke="#c09830" stroke-width="0.6"/><path d="M4 4l9-1.5v15L4 19z" fill="#f8e08a" stroke="#c8a040" stroke-width="0.6"/><path d="M4 4l3.5 1v15L4 19z" fill="#f0d070"/></svg><div class="t" style="left:25px;top:7.5px;font-size:8px">log</div></div><div class="a rz" style="left:335px;top:650px;width:101px;height:24px;"><svg class="a" style="left:2px;top:1px" width="20" height="21" viewBox="0 0 20 21"><defs><linearGradient id="np" x1="0" y1="0" x2="0" y2="1"><stop offset="0.45" stop-color="#f4f4ec"/><stop offset="0.55" stop-color="#90d060"/><stop offset="1" stop-color="#30a020"/></linearGradient></defs><path d="M1.5 3.5h14v16h-14z" fill="url(#np)" stroke="#666" stroke-width="0.8"/><path d="M4 7v7M6 12h1.5M8.5 12h1.5" stroke="#111" stroke-width="1"/><path d="M11 15l6-12.5 1.8.9-6 12.5z" fill="#f0a020" stroke="#a06010" stroke-width="0.5"/><path d="M17.5 1.5l1.5.8-.5 1-1.6-.8z" fill="#d02020"/></svg><div class="t" style="left:26px;top:7.5px;font-size:8px">C:\Program Files (x86...</div></div><div class="a rz" style="left:436px;top:650px;width:101px;height:24px;"><svg class="a" style="left:4px;top:2px" width="20" height="20" viewBox="0 0 20 20"><path d="M6 4.5v3M3 7.5h11M3 7.5v1.5M8.5 7.5v1.5M14 7.5v1.5M8.5 12v2M5.5 14h6M5.5 14v1M11.5 14v1" stroke="#222" stroke-width="0.7" fill="none"/><g fill="#fff" stroke="#111" stroke-width="0.9"><rect x="4" y="1" width="4" height="3.2"/><rect x="1" y="9" width="4" height="3"/><rect x="6.5" y="9" width="4" height="3"/><rect x="12" y="9" width="4" height="3"/><rect x="3.5" y="15" width="4" height="3"/><rect x="9.5" y="15" width="4" height="3"/></g></svg><div class="t" style="left:27px;top:7.5px;font-size:8px">VoiceGuide - [C:\Prog...</div></div><div class="a" style="left:537px;top:650px;width:100px;height:24px;border-top:1px solid #404040;border-left:1px solid #404040;border-right:1px solid #fff;border-bottom:1px solid #fff;background:#fff"><svg class="a" style="left:4px;top:2px" width="20" height="20" viewBox="0 0 20 20"><path d="M6 4.5v3M3 7.5h11M3 7.5v1.5M8.5 7.5v1.5M14 7.5v1.5M8.5 12v2M5.5 14h6M5.5 14v1M11.5 14v1" stroke="#222" stroke-width="0.7" fill="none"/><g fill="#fff" stroke="#111" stroke-width="0.9"><rect x="4" y="1" width="4" height="3.2"/><rect x="1" y="9" width="4" height="3"/><rect x="6.5" y="9" width="4" height="3"/><rect x="12" y="9" width="4" height="3"/><rect x="3.5" y="15" width="4" height="3"/><rect x="9.5" y="15" width="4" height="3"/></g></svg><div class="t" style="left:27px;top:7.5px;font-size:8px;font-weight:bold">Call Transfer Eng</div></div><div class="a sk" style="left:1091px;top:650px;width:108px;height:24px"></div><svg class="a" style="left:1092px;top:651px" width="60" height="22" viewBox="0 0 60 22"><path d="M3.5 9.5l2-2 2 2M3.5 12l2-2 2 2" fill="none" stroke="#111" stroke-width="1"/><path d="M14 5v13" stroke="#888" stroke-width="1.2"/><path d="M14.5 5.5h5l1 1.5h4l-2 3.5h-4l-1-1.5h-3z" fill="#fff" stroke="#999" stroke-width="0.7"/><rect x="29" y="7" width="8" height="7" fill="#eee" stroke="#777" stroke-width="0.8"/><rect x="31" y="9" width="6" height="5" fill="#d8d8d8" stroke="#777" stroke-width="0.6"/><path d="M31 16h6" stroke="#777"/><rect x="27" y="5" width="4" height="5" fill="#ddd" stroke="#888" stroke-width="0.6"/><path d="M45 9h2l3-3v10l-3-3h-2z" fill="#ddd" stroke="#888" stroke-width="0.7"/><circle cx="52" cy="14" r="3" fill="#e02828"/><path d="M50.8 12.8l2.4 2.4M53.2 12.8l-2.4 2.4" stroke="#fff" stroke-width="0.8"/></svg><div class="t" style="left:1154px;top:653px;font-size:8px">10:38 AM</div><div class="t" style="left:1151px;top:663px;font-size:8px">10/29/2017</div><div class="a" style="left:1188px;top:658px;width:9px;height:7px;background:linear-gradient(#3a80d8,#1a4a98)"></div><div class="a" style="left:470px;top:206px;width:260px;height:263px;background:#d4d0c8;border-top:1px solid #d4d0c8;border-left:1px solid #d4d0c8;border-right:1px solid #404040;border-bottom:1px solid #404040"><div class="a" style="left:0;top:0;right:0;bottom:0;border-top:1px solid #fff;border-left:1px solid #fff;border-right:1px solid #808080;border-bottom:1px solid #808080"></div><div class="a" style="left:1px;top:1px;width:256px;height:11px;background:#0a246a"></div><div class="t" style="left:2px;top:2px;font-size:8.5px;font-weight:bold;color:#fff">Call Transfer Eng</div><div class="a rz" style="left:246px;top:2px;width:10px;height:8px;"></div><div class="t" style="left:248px;top:0.5px;font-size:9.5px;font-weight:bold;color:#000">×</div><div class="a" style="left:6px;top:30px;width:246px;height:204px;border-top:1px solid #fff;border-left:1px solid #fff;border-right:1px solid #404040;border-bottom:1px solid #404040;box-shadow:inset -1px -1px 0 #808080"></div><div class="a" style="left:54px;top:19px;width:67px;height:11px;border-top:1px solid #fff;border-left:1px solid #fff;border-right:1px solid #404040;box-shadow:inset -1px 0 0 #808080;border-radius:1px 1px 0 0"></div><div class="t" style="left:57px;top:21.5px;font-size:7.6px;color:#111">Dial and Conference</div><div class="a" style="left:121px;top:19px;width:70px;height:11px;border-top:1px solid #fff;border-left:1px solid #fff;border-right:1px solid #404040;box-shadow:inset -1px 0 0 #808080;border-radius:1px 1px 0 0"></div><div class="t" style="left:124px;top:21.5px;font-size:7.6px;color:#111">Announce Messages</div><div class="a" style="left:191px;top:19px;width:25px;height:11px;border-top:1px solid #fff;border-left:1px solid #fff;border-right:1px solid #404040;box-shadow:inset -1px 0 0 #808080;border-radius:1px 1px 0 0"></div><div class="t" style="left:194px;top:21.5px;font-size:7.6px;color:#111">Paths</div><div class="a" style="left:7px;top:17px;width:47px;height:14px;background:#d4d0c8;border-top:1px solid #fff;border-left:1px solid #fff;border-right:1px solid #404040;box-shadow:inset -1px 0 0 #808080;border-radius:1px 1px 0 0"></div><div class="t" style="left:11px;top:20px;font-size:7.6px;color:#111">Transfer Call</div><div class="a" style="left:13px;top:43px;width:28px;height:12px"><svg width="28" height="12" viewBox="0 0 28 12" style="position:absolute;overflow:visible;"><rect x="6" y="3.5" width="4.5" height="5.5" fill="#1010e0" stroke="#000060" stroke-width="0.5"/><path d="M10.5 4h3l3.5-2h4.5l5.2.6q1 .9-.2 1.4l-4.5.1 1 .6q.5 1-.6 1.4l-1 .1q0 1.3-1 1.6l-.6 1.5q-.5.8-1.5.8h-8z" fill="#f4f4f4" stroke="#202020" stroke-width="0.8"/><path d="M14.5 8.5l4-5M17 8.8l3-4" stroke="#555" stroke-width="0.7"/></svg></div><div class="a" style="left:44px;top:42px;width:201px;height:12px;background:#fff;border-top:1px solid #808080;border-left:1px solid #808080;border-right:1px solid #fff;border-bottom:1px solid #fff;box-shadow:inset 1px 1px 0 #404040"></div><div class="t" style="left:46px;top:44.5px;font-size:7.6px;color:#111">Call Transfer Eng</div><div class="a" style="left:9px;top:62px;width:238px;height:2px;border-top:1px solid #808080;border-bottom:1px solid #fff"></div><div class="t" style="left:18px;top:73.5px;font-size:7.6px;color:#222">Phone :</div><div class="a" style="left:44px;top:72px;width:201px;height:12px;background:#fff;border-top:1px solid #808080;border-left:1px solid #808080;border-right:1px solid #fff;border-bottom:1px solid #fff;box-shadow:inset 1px 1px 0 #404040"></div><div class="t" style="left:46px;top:75px;font-family:'Liberation Mono',monospace;font-size:7.4px;color:#111;transform:none">1988192.168.5.1:5060</div><div class="t" style="left:12px;top:93px;font-size:7.6px;color:#222">Transfer :</div><div class="a" style="left:45px;top:93px;width:8px;height:8px;border-radius:50%;background:#fff;border:1px solid;border-color:#808080 #fff #fff #808080"></div><div class="t" style="left:56px;top:93px;font-size:7.6px;color:#000;transform:scaleX(.88)">PBX Hookflash Transfer - Blind</div><div class="a" style="left:45px;top:108px;width:8px;height:8px;border-radius:50%;background:#fff;border:1px solid;border-color:#808080 #fff #fff #808080"></div><div class="a" style="left:48px;top:111px;width:2px;height:2px;border-radius:50%;background:#000"></div><div class="t" style="left:56px;top:108px;font-size:7.6px;color:#000;transform:scaleX(.88)">PBX Hookflash Transfer - Monitored</div><div class="a" style="left:45px;top:123px;width:8px;height:8px;border-radius:50%;background:#fff;border:1px solid;border-color:#808080 #fff #fff #808080"></div><div class="t" style="left:56px;top:123px;font-size:7.6px;color:#000;transform:scaleX(.88)">PBX Hookflash Transfer - Announced</div><div class="a" style="left:45px;top:138px;width:8px;height:8px;border-radius:50%;background:#fff;border:1px solid;border-color:#808080 #fff #fff #808080"></div><div class="t" style="left:56px;top:138px;font-size:7.6px;color:#000;transform:scaleX(.88)">3 Way Conference Call - Blind</div><div class="a" style="left:45px;top:153px;width:8px;height:8px;border-radius:50%;background:#fff;border:1px solid;border-color:#808080 #fff #fff #808080"></div><div class="t" style="left:56px;top:153px;font-size:7.6px;color:#000;transform:scaleX(.88)">3 Way Conference Call - Monitored</div><div class="a" style="left:45px;top:168px;width:8px;height:8px;border-radius:50%;background:#fff;border:1px solid;border-color:#808080 #fff #fff #808080"></div><div class="t" style="left:56px;top:168px;font-size:7.6px;color:#000;transform:scaleX(.88)">3 Way Conference Call - Announced</div><div class="a" style="left:45px;top:183px;width:8px;height:8px;border-radius:50%;background:#fff;border:1px solid;border-color:#808080 #fff #fff #808080"></div><div class="t" style="left:56px;top:183px;font-size:7.6px;color:#000;transform:scaleX(.88)">Dialout and Conference - Blind</div><div class="a" style="left:45px;top:198px;width:8px;height:8px;border-radius:50%;background:#fff;border:1px solid;border-color:#808080 #fff #fff #808080"></div><div class="t" style="left:56px;top:198px;font-size:7.6px;color:#000;transform:scaleX(.88)">Dialout and Conference - Monitored</div><div class="a" style="left:45px;top:213px;width:8px;height:8px;border-radius:50%;background:#fff;border:1px solid;border-color:#808080 #fff #fff #808080"></div><div class="t" style="left:56px;top:213px;font-size:7.6px;color:#000;transform:scaleX(.88)">Dialout and Conference - Announced</div><div class="a rz" style="left:51px;top:238px;width:45px;height:16px;box-shadow:inset -1px -1px 0 #808080"></div><div class="t" style="left:51px;top:242px;width:45px;text-align:center;font-size:7.6px;color:#111;transform-origin:50% 0"><u>H</u>elp</div><div class="a rz" style="left:104px;top:238px;width:46px;height:16px;box-shadow:inset -1px -1px 0 #808080"></div><div class="t" style="left:104px;top:242px;width:46px;text-align:center;font-size:7.6px;color:#111;transform-origin:50% 0">OK</div><div class="a rz" style="left:156px;top:238px;width:45px;height:16px;box-shadow:inset -1px -1px 0 #808080"></div><div class="t" style="left:156px;top:242px;width:45px;text-align:center;font-size:7.6px;color:#111;transform-origin:50% 0">Cancel</div><div class="a rz" style="left:206px;top:238px;width:45px;height:16px;box-shadow:inset -1px -1px 0 #808080"></div><div class="t" style="left:206px;top:242px;width:45px;text-align:center;font-size:7.6px;color:#a0a0a0;transform-origin:50% 0">Apply</div></div></body></html>
